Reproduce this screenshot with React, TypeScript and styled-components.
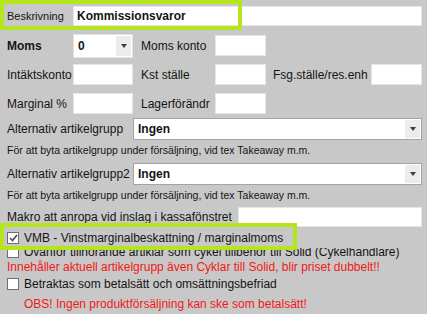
import styled, { createGlobalStyle } from 'styled-components';

const GlobalStyle = createGlobalStyle`
  body {
    margin: 0;
    background: #c8c8c8;
    font-family: "Liberation Sans", Arial, sans-serif;
    color: #141414;
  }
`;

const Form = styled.div`
  width: 427px;
  height: 314px;
  overflow: hidden;
  box-sizing: border-box;
  padding: 0 5px 0 7px;
`;

const Highlight = styled.div<{ $top: number; $width: number; $height: number }>`
  position: absolute;
  left: -7px;
  top: ${p => p.$top}px;
  width: ${p => p.$width}px;
  height: ${p => p.$height}px;
  border: 4px solid #b5e61d;
  box-sizing: border-box;
  pointer-events: none;
  z-index: 2;
`;

const TopRow = styled.div`
  position: relative;
  display: flex;
  align-items: center;
  height: 31px;
`;

const Label = styled.span<{ $width?: number; $size?: number; $bold?: boolean; $indent?: number }>`
  flex: none;
  width: ${p => (p.$width ? `${p.$width}px` : 'auto')};
  padding-left: ${p => p.$indent || 0}px;
  box-sizing: border-box;
  font-size: ${p => p.$size || 12}px;
  font-weight: ${p => (p.$bold ? 'bold' : 'normal')};
  white-space: nowrap;
`;

const TextBox = styled.div<{ $height?: number }>`
  flex: 1;
  height: ${p => p.$height || 21}px;
  background: #fff;
  border: 1px solid #e6e6e6;
  box-sizing: border-box;
  padding-left: 3px;
  display: flex;
  align-items: center;
  font-size: 12px;
  font-weight: bold;
`;

const Grid = styled.div`
  display: grid;
  grid-template-columns: 66px 60px 82px 51px 105px 51px;
  grid-auto-rows: 29px;
  align-items: center;
`;

const Select = styled.div<{ $height: number; $border: string }>`
  display: flex;
  height: ${p => p.$height}px;
  background: #fff;
  border: 1px solid ${p => p.$border};
  box-sizing: border-box;
  font-size: 12px;
  font-weight: bold;
  flex: 1;
`;

const SelectValue = styled.span`
  flex: 1;
  display: flex;
  align-items: center;
  padding-left: 4px;
`;

const SelectButton = styled.span`
  width: 15px;
  display: flex;
  align-items: center;
  justify-content: center;
  background: #ececec;
  margin: 1px;

  &::after {
    content: '';
    border-left: 3px solid transparent;
    border-right: 3px solid transparent;
    border-top: 4px solid #3c3c3c;
  }
`;

const FieldRow = styled.div<{ $height: number }>`
  display: flex;
  align-items: center;
  height: ${p => p.$height}px;
`;

const Helper = styled.div<{ $after: number }>`
  font-size: 10.5px;
  line-height: 20px;
  margin-bottom: ${p => p.$after}px;
  white-space: nowrap;
`;

const CheckRow = styled.div<{ $height: number }>`
  position: relative;
  display: flex;
  align-items: center;
  height: ${p => p.$height}px;
  font-size: 12px;
  white-space: nowrap;
`;

const ClippedRow = styled.div`
  display: flex;
  align-items: flex-end;
  height: 11px;
  overflow: hidden;
  font-size: 12px;
  white-space: nowrap;
`;

const ClippedInner = styled.div`
  display: flex;
  align-items: center;
  height: 15px;
  flex: none;
`;

const Box = styled.span`
  flex: none;
  width: 12px;
  height: 12px;
  margin-right: 5px;
  background: #fff;
  border: 1px solid #6e6e6e;
  box-sizing: border-box;
  display: flex;
  align-items: center;
  justify-content: center;
`;

const Warning = styled.div<{ $indent?: number; $height: number; $before?: number }>`
  color: #f21818;
  font-size: 12px;
  line-height: ${p => p.$height}px;
  padding-left: ${p => p.$indent || 0}px;
  margin-top: ${p => p.$before || 0}px;
  white-space: nowrap;
`;

const Check = ({ checked }: { checked?: boolean }) => (
  <Box>
    {checked && (
      <svg width="9" height="8" viewBox="0 0 9 8">
        <polyline points="1,4 3.5,6.5 8,1" fill="none" stroke="#4a4a4a" strokeWidth="1.6" />
      </svg>
    )}
  </Box>
);

const DropDown = ({ value, height, border }: { value: string; height: number; border: string }) => (
  <Select $height={height} $border={border}>
    <SelectValue>{value}</SelectValue>
    <SelectButton />
  </Select>
);

export default function App() {
  return (
    <>
      <GlobalStyle />
      <Form>
        <TopRow>
          <Highlight $top={0} $width={242} $height={30} />
          <Label $width={66} $size={11}>Beskrivning</Label>
          <TextBox $height={20}>Kommissionsvaror</TextBox>
        </TopRow>

        <Grid>
          <Label $bold>Moms</Label>
          <DropDown value="0" height={24} border="#e2e2e2" />
          <Label $indent={8}>Moms konto</Label>
          <TextBox />
          <span />
          <span />

          <Label>Intäktskonto</Label>
          <TextBox />
          <Label $indent={8}>Kst ställe</Label>
          <TextBox />
          <Label $indent={7}>Fsg.ställe/res.enh</Label>
          <TextBox />

          <Label>Marginal %</Label>
          <TextBox />
          <Label $indent={8}>Lagerförändr</Label>
          <TextBox />
        </Grid>

        <FieldRow $height={22}>
          <Label $width={126}>Alternativ artikelgrupp</Label>
          <DropDown value="Ingen" height={22} border="#a4a4a4" />
        </FieldRow>
        <Helper $after={3}>För att byta artikelgrupp under försäljning, vid tex Takeaway m.m.</Helper>

        <FieldRow $height={22}>
          <Label $width={126}>Alternativ artikelgrupp2</Label>
          <DropDown value="Ingen" height={22} border="#a4a4a4" />
        </FieldRow>
        <Helper $after={1}>För att byta artikelgrupp under försäljning, vid tex Takeaway m.m.</Helper>

        <FieldRow $height={21}>
          <Label $width={231}>Makro att anropa vid inslag i kassafönstret</Label>
          <TextBox $height={20} />
        </FieldRow>

        <CheckRow $height={21}>
          <Highlight $top={-4} $width={297} $height={27} />
          <Check checked />
          VMB - Vinstmarginalbeskattning / marginalmoms
        </CheckRow>

        <ClippedRow>
          <ClippedInner>
            <Check />
            Ovanför tillhörande artiklar som cykel tillbehör till Solid (Cykelhandlare)
          </ClippedInner>
        </ClippedRow>

        <Warning $height={17}>
          Innehåller aktuell artikelgrupp även Cyklar till Solid, blir priset dubbelt!!
        </Warning>

        <CheckRow $height={15}>
          <Check />
          Betraktas som betalsätt och omsättningsbefriad
        </CheckRow>

        <Warning $height={16} $indent={17} $before={5}>
          OBS! Ingen produktförsäljning kan ske som betalsätt!
        </Warning>
      </Form>
    </>
  );
}
